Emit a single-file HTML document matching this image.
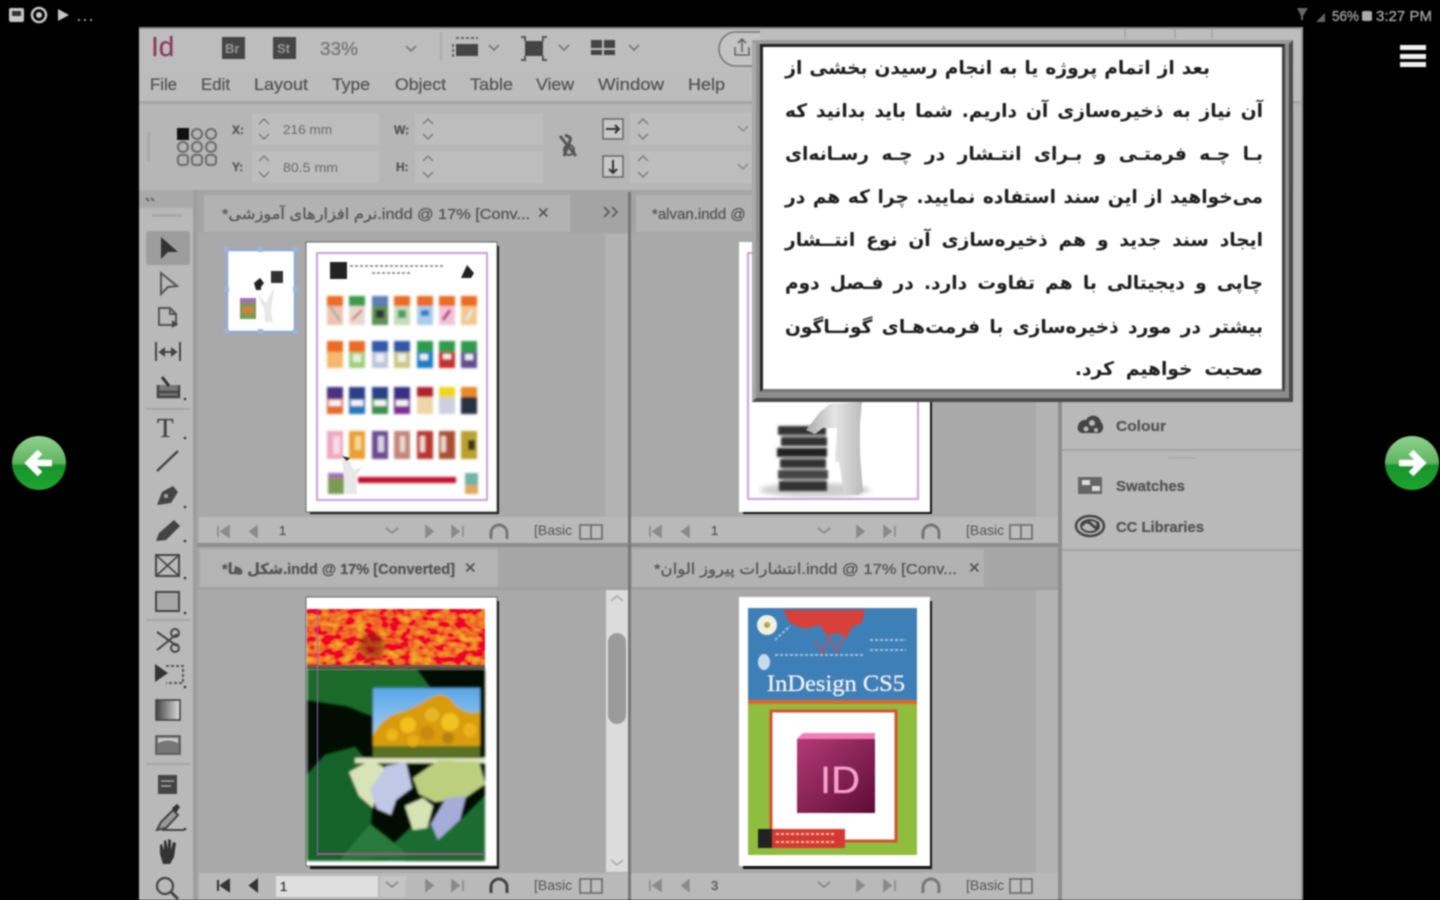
<!DOCTYPE html>
<html lang="en">
<head>
<meta charset="utf-8">
<title>InDesign lesson</title>
<style>
html,body{margin:0;padding:0;background:#000;width:1440px;height:900px;overflow:hidden}
#wrap{position:absolute;left:0;top:0;width:1440px;height:900px;filter:blur(.8px);overflow:hidden}
svg{position:absolute;left:0;top:0}
svg text{font-family:"Liberation Sans","DejaVu Sans",sans-serif;fill:#555;stroke:#555;stroke-width:.3px}
#pop{position:absolute;left:752px;top:40px;width:541px;height:362px;box-sizing:border-box;background:#8e8e8e;border-top:4px solid #9a9a9a;border-left:4px solid #a8a8a8;border-right:4px solid #4a4a4a;border-bottom:4px solid #4a4a4a}
#in{position:absolute;left:4px;top:0;width:525px;height:348px;box-sizing:border-box;background:#fff;border:3px solid #222;border-right-color:#444;border-bottom-color:#777}
.l{position:absolute;left:22px;width:478px;height:43px;line-height:43px;font-family:"DejaVu Sans",sans-serif;font-weight:bold;font-size:18.6px;color:#1c1c1c;direction:rtl;text-align:justify;text-align-last:justify;white-space:nowrap}
.s{text-align-last:right;text-align:right}
</style>
</head>
<body>
<div id="wrap">
<svg width="1440" height="900" viewBox="0 0 1440 900" xmlns="http://www.w3.org/2000/svg">
<defs>
<linearGradient id="gl" x1="0" y1="0" x2="0" y2="1"><stop offset="0" stop-color="#8fd08f"/><stop offset=".5" stop-color="#5fb55f"/><stop offset=".55" stop-color="#17932a"/><stop offset="1" stop-color="#1ea52f"/></linearGradient>
<linearGradient id="gr" x1="0" y1="0" x2="1" y2="0"><stop offset="0" stop-color="#444"/><stop offset="1" stop-color="#ddd"/></linearGradient>
<linearGradient id="idb" x1="0" y1="0" x2="1" y2="1"><stop offset="0" stop-color="#b33a77"/><stop offset="1" stop-color="#5d0c35"/></linearGradient>
<linearGradient id="sky" x1="0" y1="0" x2="0" y2="1"><stop offset="0" stop-color="#5aa6e6"/><stop offset="1" stop-color="#bfe0f4"/></linearGradient>
<linearGradient id="man" x1="0" y1="0" x2="1" y2="0"><stop offset="0" stop-color="#aaa"/><stop offset=".5" stop-color="#e4e4e4"/><stop offset="1" stop-color="#bbb"/></linearGradient>
<filter id="n1" x="0" y="0" width="100%" height="100%"><feTurbulence type="fractalNoise" baseFrequency=".09 .14" numOctaves="2" seed="4"/><feColorMatrix values="0 0 0 0 .86  0 0 0 1.1 -.42  0 0 0 0 .02  0 0 0 0 1"/></filter>
<filter id="b1"><feGaussianBlur stdDeviation="1"/></filter>
<filter id="b2"><feGaussianBlur stdDeviation="2.500"/></filter>
</defs>

<!-- status bar -->
<g fill="#c8c8c8">
<rect x="9" y="8" width="15" height="14" rx="2"/><rect x="12" y="11" width="9" height="5" fill="#333"/>
<circle cx="39" cy="15" r="7" fill="none" stroke="#c8c8c8" stroke-width="2.5"/><circle cx="39" cy="15" r="3"/>
<path d="M58 9v12l11-6z"/>
<circle cx="79" cy="20" r="1"/><circle cx="85" cy="20" r="1"/><circle cx="91" cy="20" r="1"/>
</g>
<path d="M1297 8h11l-5 8v4h-2v-4z" fill="#666"/><path d="M1316 22l9-9v9z" fill="#666"/>
<text x="1332" y="21" font-size="15" textLength="27" lengthAdjust="spacingAndGlyphs" style="fill:#a5a5a5;stroke:#a5a5a5">56%</text>
<rect x="1362" y="11" width="10" height="10" rx="2" fill="#aaa"/>
<text x="1376" y="21" font-size="15" textLength="56" lengthAdjust="spacingAndGlyphs" style="fill:#a5a5a5;stroke:#a5a5a5">3:27 PM</text>
<g fill="#f0f0f0"><rect x="1400" y="45" width="26" height="5"/><rect x="1400" y="54" width="26" height="5"/><rect x="1400" y="62" width="26" height="5"/></g>

<!-- arrows -->
<circle cx="39" cy="463" r="27" fill="url(#gl)"/>
<path d="M52 463H32M40 452l-11 11 11 11" fill="none" stroke="#fff" stroke-width="6.5"/>
<circle cx="1412" cy="463" r="27" fill="url(#gl)"/>
<path d="M1399 463h20M1411 452l11 11-11 11" fill="none" stroke="#fff" stroke-width="6.5"/>

<!-- app window -->
<rect x="139" y="27" width="1164" height="873" fill="#b7b7b7"/>
<rect x="139" y="27" width="1164" height="2" fill="#8a8a8a"/>
<rect x="139" y="29" width="1164" height="41" fill="#bdbdbd"/>
<rect x="139" y="70" width="1164" height="32" fill="#bcbcbc"/>
<rect x="139" y="101" width="1164" height="3" fill="#a5a5a5"/>
<rect x="139" y="104" width="1164" height="86" fill="#b6b6b6"/>

<text x="151" y="56" font-size="28" style="fill:#8b3d5c;stroke:#8b3d5c">Id</text>
<rect x="222" y="37" width="23" height="22" fill="#454545"/><text x="225" y="53" font-size="13" font-weight="bold" style="fill:#999;stroke:none">Br</text>
<rect x="273" y="37" width="23" height="22" fill="#454545"/><text x="277" y="53" font-size="13" font-weight="bold" style="fill:#999;stroke:none">St</text>
<text x="320" y="55" font-size="18" textLength="38" lengthAdjust="spacingAndGlyphs" style="fill:#777;stroke:#777">33%</text>
<g fill="none" stroke="#777" stroke-width="1.6"><path d="M406 46l5 5 5-5M489 45l5 5 5-5M559 45l5 5 5-5M629 45l5 5 5-5"/></g>
<rect x="440" y="32" width="2" height="28" fill="#aaa"/>
<rect x="456" y="44" width="22" height="12" fill="#444"/><path d="M456 38h22M453 44v14" stroke="#666" stroke-width="2" stroke-dasharray="3 2" fill="none"/>
<rect x="525" y="41" width="18" height="15" fill="#444"/><path d="M521 37h4v4M547 37h-4v4M521 60h4v-4M547 60h-4v-4" stroke="#555" fill="none" stroke-width="2"/>
<path d="M591 40h11v8h-11zM604 40h11v8h-11zM591 50h11v5h-11zM604 50h11v5h-11z" fill="#444"/>
<path d="M760 32h-24a17 17 0 0 0 0 34h24" fill="#c4c4c4" stroke="#777" stroke-width="1.6"/>
<path d="M735 47v8h14v-8M742 52v-12M738 43l4-4 4 4" fill="none" stroke="#666" stroke-width="1.6"/>

<g>
<text x="150" y="90" font-size="17" textLength="27" lengthAdjust="spacingAndGlyphs">File</text><text x="201" y="90" font-size="17" textLength="29" lengthAdjust="spacingAndGlyphs">Edit</text><text x="254" y="90" font-size="17" textLength="54" lengthAdjust="spacingAndGlyphs">Layout</text><text x="332" y="90" font-size="17" textLength="38" lengthAdjust="spacingAndGlyphs">Type</text><text x="395" y="90" font-size="17" textLength="51" lengthAdjust="spacingAndGlyphs">Object</text><text x="470" y="90" font-size="17" textLength="43" lengthAdjust="spacingAndGlyphs">Table</text><text x="536" y="90" font-size="17" textLength="38" lengthAdjust="spacingAndGlyphs">View</text><text x="598" y="90" font-size="17" textLength="66" lengthAdjust="spacingAndGlyphs">Window</text><text x="688" y="90" font-size="17" textLength="37" lengthAdjust="spacingAndGlyphs">Help</text>
</g>

<!-- control panel -->
<rect x="147" y="132" width="3" height="30" fill="#a8a8a8"/>
<rect x="177" y="128" width="12" height="12" fill="#111"/>
<g fill="none" stroke="#6a6a6a" stroke-width="2">
<circle cx="197" cy="134" r="5"/><circle cx="211" cy="134" r="5"/>
<circle cx="183" cy="147" r="5"/><circle cx="197" cy="147" r="5"/><circle cx="211" cy="147" r="5"/>
<rect x="178" y="155" width="10" height="10" rx="3"/><rect x="192" y="155" width="10" height="10" rx="3"/><rect x="206" y="155" width="10" height="10" rx="3"/>
</g>
<g fill="#bdbdbd"><rect x="252" y="113" width="127" height="32"/><rect x="252" y="151" width="127" height="32"/><rect x="415" y="114" width="128" height="31"/><rect x="415" y="151" width="128" height="32"/><rect x="630" y="113" width="125" height="32"/><rect x="630" y="151" width="125" height="32"/></g>
<text x="232" y="134" font-size="12" font-weight="bold">X:</text><text x="232" y="171" font-size="12" font-weight="bold">Y:</text>
<text x="283" y="134" font-size="13" textLength="49" lengthAdjust="spacingAndGlyphs" style="fill:#6a6a6a;stroke:none">216 mm</text><text x="283" y="172" font-size="13" textLength="55" lengthAdjust="spacingAndGlyphs" style="fill:#6a6a6a;stroke:none">80.5 mm</text>
<text x="394" y="134" font-size="12" font-weight="bold">W:</text><text x="396" y="171" font-size="12" font-weight="bold">H:</text>
<g fill="none" stroke="#7c7c7c" stroke-width="1.5"><path d="M259 124l5-5 5 5M259 134l5 5 5-5M259 161l5-5 5 5M259 172l5 5 5-5M423 124l5-5 5 5M423 134l5 5 5-5M423 161l5-5 5 5M423 172l5 5 5-5M638 124l5-5 5 5M638 134l5 5 5-5M638 161l5-5 5 5M638 172l5 5 5-5"/></g>
<path d="M560 136l16 20M565 135l6 3M571 138l-7 18" stroke="#555" stroke-width="3" fill="none"/><circle cx="569" cy="150" r="5" fill="none" stroke="#555" stroke-width="2"/>
<rect x="603" y="119" width="20" height="20" fill="#c8c8c8" stroke="#666" stroke-width="1.5"/><path d="M606 129h13M615 125l4 4-4 4" fill="none" stroke="#333" stroke-width="2"/>
<rect x="603" y="156" width="20" height="21" fill="#c8c8c8" stroke="#666" stroke-width="1.5"/><path d="M613 160v13M609 169l4 4 4-4" fill="none" stroke="#333" stroke-width="2"/>
<path d="M738 126l5 5 5-5M738 164l5 5 5-5" fill="none" stroke="#8a8a8a" stroke-width="1.5"/>

<!-- document area -->
<rect x="195" y="190" width="867" height="710" fill="#a9a9a9"/>
<rect x="195" y="190" width="867" height="43" fill="#a4a4a4"/>
<rect x="195" y="545" width="867" height="43" fill="#a6a6a6"/>
<rect x="204" y="195" width="366" height="37" fill="#b2b2b2"/>
<rect x="636" y="195" width="124" height="37" fill="#b2b2b2"/>
<rect x="200" y="549" width="298" height="38" fill="#b4b4b4"/>
<rect x="632" y="549" width="352" height="38" fill="#b2b2b2"/>
<rect x="195" y="587" width="867" height="3" fill="#a0a0a0"/>

<text x="222" y="219" font-size="15" textLength="308" lengthAdjust="spacingAndGlyphs">*نرم افزارهای آموزشی.indd @ 17% [Conv...</text>
<text x="537" y="218" font-size="15" font-weight="bold">✕</text>
<path d="M604 207l5 5-5 5M612 207l5 5-5 5" fill="none" stroke="#5a5a5a" stroke-width="1.8"/>
<text x="652" y="219" font-size="15">*alvan.indd @</text>
<text x="222" y="574" font-size="15" font-weight="bold" textLength="233" lengthAdjust="spacingAndGlyphs">*شکل ها.indd @ 17% [Converted]</text>
<text x="464" y="573" font-size="15" font-weight="bold">✕</text>
<text x="654" y="574" font-size="15" textLength="303" lengthAdjust="spacingAndGlyphs">*انتشارات پیروز الوان.indd @ 17% [Conv...</text>
<text x="968" y="573" font-size="15" font-weight="bold">✕</text>

<!-- scrollbars -->
<rect x="605" y="234" width="23" height="283" fill="#b3b3b3"/>
<rect x="1036" y="234" width="22" height="283" fill="#b3b3b3"/>
<rect x="606" y="590" width="22" height="282" fill="#dcdcdc"/>
<rect x="608" y="633" width="18" height="91" rx="9" fill="#9b9b9b"/>
<path d="M611 601l6-5 6 5M611 860l6 5 6-5" fill="none" stroke="#aaa" stroke-width="1.6"/>
<rect x="1036" y="590" width="22" height="283" fill="#b3b3b3"/>

<!-- status strips -->
<rect x="199" y="517" width="430" height="26" fill="#b9b9b9"/>
<rect x="631" y="517" width="427" height="26" fill="#b9b9b9"/>
<rect x="199" y="873" width="430" height="27" fill="#b9b9b9"/>
<rect x="631" y="873" width="427" height="27" fill="#b9b9b9"/>
<rect x="195" y="543" width="867" height="4" fill="#8d8d8d"/>
<rect x="628" y="192" width="3" height="708" fill="#767676"/>
<rect x="1058" y="190" width="4" height="710" fill="#8d8d8d"/>
<rect x="276" y="876" width="102" height="21" fill="#dedede"/>
<rect x="380" y="876" width="26" height="21" fill="#c4c4c4"/>

<g fill="#8a8a8a" stroke="#8a8a8a">
<path d="M218 526v11M229 526l-8 5.500 8 5.500zM257 526l-7 5.500 7 5.500zM426 526l7 5.500-7 5.500zM452 526l7 5.500-7 5.500zM463 526v11" stroke-width="1.6"/>
<path d="M650 526v11M661 526l-8 5.500 8 5.500zM689 526l-7 5.500 7 5.500zM857 526l7 5.500-7 5.500zM884 526l7 5.500-7 5.500zM895 526v11" stroke-width="1.6"/>
<path d="M650 880v11M661 880l-8 5.500 8 5.500zM689 880l-7 5.500 7 5.500zM857 880l7 5.500-7 5.500zM884 880l7 5.500-7 5.500zM895 880v11" stroke-width="1.6"/>
<path d="M426 880l7 5.500-7 5.500zM452 880l7 5.500-7 5.500zM463 880v11" stroke-width="1.6"/>
</g>
<path d="M218 880v11M229 880l-8 5.500 8 5.500zM257 880l-7 5.500 7 5.500z" fill="#333" stroke="#333" stroke-width="2"/>
<g fill="none" stroke="#8a8a8a" stroke-width="1.8"><path d="M386 528l6 5 6-5M818 528l6 5 6-5M386 882l6 5 6-5M818 882l6 5 6-5"/></g>
<text x="279" y="535" font-size="13">1</text><text x="711" y="535" font-size="13">1</text><text x="280" y="891" font-size="13" style="fill:#333;stroke:#333">1</text><text x="711" y="890" font-size="13">3</text>
<g fill="none" stroke="#777" stroke-width="3"><path d="M491 539v-6a8 8 0 0 1 16 0v6M923 539v-6a8 8 0 0 1 16 0v6M923 893v-6a8 8 0 0 1 16 0v6"/></g>
<path d="M491 893v-6a8 8 0 0 1 16 0v6" fill="none" stroke="#444" stroke-width="3"/>
<g><text x="534" y="535" font-size="14" style="stroke:none">[Basic</text><text x="966" y="535" font-size="14" style="stroke:none">[Basic</text><text x="534" y="890" font-size="14" style="stroke:none">[Basic</text><text x="966" y="890" font-size="14" style="stroke:none">[Basic</text></g>
<g fill="#bdbdbd" stroke="#666" stroke-width="1.6"><path d="M580 525h22v14h-22zM591 525v14M1010 525h22v14h-22zM1021 525v14M580 879h22v14h-22zM591 879v14M1010 879h22v14h-22zM1021 879v14"/></g>

<!-- toolbar -->
<rect x="139" y="190" width="56" height="710" fill="#b9b9b9"/>
<rect x="139" y="190" width="56" height="18" fill="#a9a9a9"/>
<rect x="193" y="190" width="4" height="710" fill="#9e9e9e"/>
<path d="M146 198l3 3M151 198l3 3" stroke="#666" stroke-width="2"/>
<rect x="152" y="214" width="30" height="3" fill="#a8a8a8"/>
<rect x="146" y="231" width="44" height="34" rx="3" fill="#9d9d9d"/>
<rect x="146" y="408" width="44" height="2" fill="#a5a5a5"/>
<rect x="146" y="619" width="44" height="2" fill="#a5a5a5"/>
<rect x="146" y="763" width="44" height="2" fill="#a5a5a5"/>
<path d="M161 237l17 15-10 0-7 7z" fill="#333"/>
<path d="M161 273l16 13-9 1-7 7z" fill="none" stroke="#555" stroke-width="2"/>
<path d="M159 308h11l6 6v11h-17zM170 308v6h6" fill="none" stroke="#555" stroke-width="2"/><path d="M172 320l6 4-6 4z" fill="#444"/>
<path d="M156 342v19M180 342v19M160 352h16M160 352l4-3v6zM176 352l-4-3v6z" fill="none" stroke="#444" stroke-width="2"/>
<path d="M158 385v12h21v-12M158 392h21" fill="#777" stroke="#444" stroke-width="2.5"/><path d="M162 377l7 9" stroke="#333" stroke-width="3"/>
<text x="157" y="437" font-size="27" style="font-family:'Liberation Serif',serif;fill:#444;stroke:#444">T</text>
<path d="M157 471l21-20" stroke="#444" stroke-width="2.4"/>
<path d="M157 505l5-13 11-6 5 6-7 11z" fill="#444"/><circle cx="166" cy="496" r="2" fill="#aaa"/>
<path d="M156 541l3-8 15-13 6 6-14 14z" fill="#444"/>
<rect x="156" y="555" width="23" height="21" fill="none" stroke="#444" stroke-width="2"/><path d="M156 555l23 21M179 555l-23 21" stroke="#444" stroke-width="1.6"/>
<rect x="156" y="592" width="23" height="19" fill="#a8a8a8" stroke="#444" stroke-width="2"/>
<path d="M157 632l20 14M157 650l20-16" stroke="#444" stroke-width="2"/><circle cx="175" cy="633" r="4" fill="none" stroke="#444" stroke-width="2"/><circle cx="175" cy="648" r="4" fill="none" stroke="#444" stroke-width="2"/>
<path d="M155 664l13 9-13 9z" fill="#333"/><path d="M166 666h17v17h-17" fill="none" stroke="#555" stroke-width="2" stroke-dasharray="3 2"/>
<rect x="156" y="700" width="24" height="20" fill="url(#gr)" stroke="#444" stroke-width="1.6"/>
<rect x="156" y="736" width="24" height="18" fill="#777" stroke="#555" stroke-width="1.6"/><path d="M158 743q10-5 20 0v-5h-20z" fill="#ccc"/>
<rect x="158" y="775" width="19" height="19" fill="#444"/><path d="M161 781h13M161 786h10" stroke="#aaa" stroke-width="1.5"/>
<path d="M157 830l4-8 12-12 5 5-12 13z" fill="#999" stroke="#444" stroke-width="2"/><path d="M172 808l5-4 3 3-4 6z" fill="#333"/><path d="M162 830h22" stroke="#444" stroke-width="2"/>
<path d="M160 854v-9l2-1 2 6v-9l2-1 2 9v-10l3 1v10l2-8 3 1-2 14-4 7h-7z" fill="#333"/>
<circle cx="165" cy="886" r="8" fill="none" stroke="#444" stroke-width="2.2"/><path d="M171 892l7 7" stroke="#444" stroke-width="3"/>
<g fill="#333"><circle cx="185" cy="399" r="1.300"/><circle cx="185" cy="438" r="1.300"/><circle cx="185" cy="507" r="1.300"/><circle cx="185" cy="541" r="1.300"/><circle cx="185" cy="578" r="1.300"/><circle cx="185" cy="613" r="1.300"/><circle cx="185" cy="687" r="1.300"/><circle cx="185" cy="829" r="1.300"/></g>

<!-- right panel -->
<rect x="1062" y="190" width="240" height="710" fill="#b7b7b7"/>
<rect x="1062" y="404" width="240" height="45" fill="#b9b9b9"/>
<rect x="1062" y="449" width="240" height="2" fill="#a3a3a3"/>
<rect x="1062" y="451" width="240" height="98" fill="#b9b9b9"/>
<rect x="1062" y="549" width="240" height="2" fill="#a3a3a3"/>
<rect x="1168" y="457" width="28" height="2" fill="#a9a9a9"/>
<rect x="1301" y="27" width="2" height="873" fill="#9a9a9a"/>
<path d="M1078 426a7 7 0 0 1 8-6a8 8 0 0 1 15 2a7 7 0 0 1-1 11h-17a5 5 0 0 1-5-7z" fill="#444"/><circle cx="1092" cy="423" r="3" fill="#b9b9b9"/><circle cx="1086" cy="429" r="2.500" fill="#b9b9b9"/><circle cx="1096" cy="430" r="2" fill="#b9b9b9"/>
<text x="1116" y="431" font-size="15" font-weight="bold" textLength="50" lengthAdjust="spacingAndGlyphs">Colour</text>
<rect x="1078" y="477" width="24" height="17" fill="#666"/><rect x="1082" y="480" width="8" height="5" fill="#ddd"/><rect x="1092" y="486" width="8" height="5" fill="#ddd"/>
<text x="1116" y="491" font-size="15" font-weight="bold" textLength="69" lengthAdjust="spacingAndGlyphs">Swatches</text>
<ellipse cx="1090" cy="526" rx="14" ry="10" fill="none" stroke="#444" stroke-width="2.500"/><ellipse cx="1090" cy="526" rx="9" ry="6" fill="none" stroke="#444" stroke-width="2"/><path d="M1082 526a5 5 0 0 1 9-2l5 4a4 4 0 0 0 1-6" fill="none" stroke="#444" stroke-width="3"/>
<text x="1116" y="532" font-size="15" font-weight="bold" textLength="88" lengthAdjust="spacingAndGlyphs">CC Libraries</text>

<!-- small pasteboard item -->
<rect x="227" y="250" width="68" height="82" fill="#fff" stroke="#8faad8" stroke-width="2.500"/>
<g fill="#9db4de"><rect x="224" y="247" width="5" height="5"/><rect x="258" y="247" width="5" height="5"/><rect x="293" y="247" width="5" height="5"/><rect x="224" y="287" width="5" height="5"/><rect x="293" y="287" width="5" height="5"/><rect x="224" y="329" width="5" height="5"/><rect x="258" y="329" width="5" height="5"/><rect x="293" y="329" width="5" height="5"/></g>
<rect x="271" y="271" width="12" height="12" fill="#333"/><path d="M254 283l6-5 4 5-3 4v3h-5z" fill="#222"/>
<rect x="240" y="298" width="16" height="21" fill="#7b9b55"/><rect x="240" y="298" width="16" height="5" fill="#a56fb3"/><rect x="243" y="307" width="10" height="6" fill="#e07b3a"/>
<path d="M258 295l8 8 8-16-3 25 2 10h-8l-1-12z" fill="#e8e8e8"/>

<!-- page 1 -->
<rect x="310" y="246" width="189" height="268" fill="#111"/>
<rect x="306" y="242" width="191" height="270" fill="#fff" stroke="#666" stroke-width="1"/>
<rect x="317" y="253" width="170" height="247" fill="none" stroke="#c9a0e4" stroke-width="2"/>
<rect x="330" y="262" width="17" height="17" fill="#222"/>
<path d="M350 266h95M372 273h40" stroke="#999" stroke-width="2" stroke-dasharray="3 2"/>
<path d="M461 278l6-13 7 8-3 5z" fill="#222"/>
<g filter="url(#b1)">
<rect x="327" y="296" width="16" height="29" fill="#edc3ae"/><rect x="327" y="296" width="16" height="10" fill="#ec6a22"/><path d="M330 306l10 15" stroke="#8aa" stroke-width="2"/>
<rect x="349" y="296" width="16" height="29" fill="#e7d9cf"/><rect x="349" y="296" width="16" height="10" fill="#3b9a4c"/><path d="M352 320l10-10" stroke="#c66" stroke-width="2"/>
<rect x="372" y="296" width="16" height="29" fill="#5f8f55"/><rect x="372" y="296" width="16" height="10" fill="#5c7eb4"/><rect x="376" y="310" width="8" height="8" fill="#333"/>
<rect x="394" y="296" width="16" height="29" fill="#c6dbb6"/><rect x="394" y="296" width="16" height="10" fill="#ec6a22"/><rect x="398" y="310" width="8" height="8" fill="#4a9c6a"/>
<rect x="417" y="296" width="16" height="29" fill="#a8cdeb"/><rect x="417" y="296" width="16" height="10" fill="#ec6a22"/><rect x="421" y="310" width="8" height="6" fill="#2a7ec0"/>
<rect x="439" y="296" width="16" height="29" fill="#f0c3d8"/><rect x="439" y="296" width="16" height="10" fill="#ec6a22"/><path d="M443 320l7-10" stroke="#b0246a" stroke-width="3"/>
<rect x="461" y="296" width="16" height="29" fill="#f2c88a"/><rect x="461" y="296" width="16" height="10" fill="#ec6a22"/><path d="M466 320l6-10" stroke="#e8e8e8" stroke-width="3"/>
<rect x="327" y="341" width="16" height="27" fill="#f4b96c"/><rect x="327" y="341" width="16" height="11" fill="#ec6a22"/>
<rect x="349" y="341" width="16" height="27" fill="#9fcf7c"/><rect x="349" y="341" width="16" height="11" fill="#ec6a22"/><rect x="353" y="354" width="8" height="8" fill="#e8f0e0"/>
<rect x="372" y="341" width="16" height="27" fill="#bcc6dc"/><rect x="372" y="341" width="16" height="11" fill="#3258a8"/><rect x="376" y="354" width="8" height="8" fill="#f0f0f0"/>
<rect x="394" y="341" width="16" height="27" fill="#c8c883"/><rect x="394" y="341" width="16" height="11" fill="#3258a8"/><rect x="398" y="354" width="8" height="8" fill="#f0f0f0"/>
<rect x="417" y="341" width="16" height="27" fill="#1f7ec4"/><rect x="417" y="341" width="16" height="11" fill="#2f9a4d"/><rect x="420" y="354" width="8" height="6" fill="#f0f0f0"/>
<rect x="439" y="341" width="16" height="27" fill="#c52e2e"/><rect x="439" y="341" width="16" height="11" fill="#2f9a4d"/><rect x="443" y="354" width="8" height="5" fill="#f0f0f0"/>
<rect x="461" y="341" width="16" height="27" fill="#5d4b8f"/><rect x="461" y="341" width="16" height="11" fill="#2f9a4d"/><rect x="465" y="354" width="8" height="6" fill="#f0f0f0"/>
<rect x="327" y="387" width="16" height="27" fill="#e56c2c"/><rect x="327" y="387" width="16" height="12" fill="#46337f"/><rect x="329" y="400" width="12" height="6" fill="#f4f4f4"/>
<rect x="349" y="387" width="16" height="27" fill="#2477bb"/><rect x="349" y="387" width="16" height="12" fill="#2c3f86"/><rect x="351" y="400" width="12" height="6" fill="#f4f4f4"/>
<rect x="372" y="387" width="16" height="27" fill="#3a8f4a"/><rect x="372" y="387" width="16" height="12" fill="#2c3f86"/><rect x="374" y="400" width="12" height="6" fill="#f4f4f4"/>
<rect x="394" y="387" width="16" height="27" fill="#7e2f8f"/><rect x="394" y="387" width="16" height="12" fill="#3b2f86"/><rect x="396" y="400" width="12" height="6" fill="#f4f4f4"/>
<rect x="417" y="387" width="16" height="27" fill="#eed6a8"/><rect x="417" y="387" width="16" height="10" fill="#b0242e"/>
<rect x="439" y="387" width="16" height="27" fill="#ccd0dc"/><rect x="439" y="387" width="16" height="10" fill="#f3d51e"/>
<rect x="461" y="387" width="16" height="27" fill="#25303f"/><rect x="461" y="387" width="16" height="10" fill="#e8892b"/>
<rect x="327" y="431" width="16" height="28" fill="#eda7bf"/><rect x="333" y="436" width="7" height="18" fill="#f6dbe6"/>
<rect x="349" y="431" width="16" height="28" fill="#e9a12e"/><rect x="355" y="436" width="6" height="14" fill="#f3d99a"/>
<rect x="372" y="431" width="16" height="28" fill="#6c4b8e"/><rect x="378" y="436" width="6" height="16" fill="#dcd4e8"/>
<rect x="394" y="431" width="16" height="28" fill="#c48678"/><rect x="400" y="436" width="5" height="16" fill="#eadad4"/>
<rect x="417" y="431" width="16" height="28" fill="#b8372e"/><rect x="420" y="436" width="5" height="16" fill="#f0d8d0"/>
<rect x="439" y="431" width="16" height="28" fill="#a84f32"/><rect x="441" y="436" width="5" height="16" fill="#ecd8c8"/>
<rect x="461" y="431" width="16" height="28" fill="#b9a12f"/><rect x="468" y="440" width="7" height="10" fill="#3a3020"/>
<rect x="328" y="473" width="16" height="21" fill="#7b9b55"/><rect x="328" y="473" width="16" height="5" fill="#a56fb3"/>
<rect x="465" y="473" width="13" height="21" fill="#6fb3a8"/><rect x="465" y="485" width="13" height="9" fill="#e0a860"/>
<rect x="358" y="477" width="98" height="6" fill="#c4102a"/>
</g>
<path d="M342 458l8 4 4 8 8-3-6 10 1 17h-11l-2-18z" fill="#e8e8e8"/>
<path d="M342 456l8 2-3 3z" fill="#222"/>

<!-- page 2 -->
<rect x="743" y="246" width="189" height="268" fill="#111"/>
<rect x="739" y="242" width="191" height="270" fill="#fff"/>
<rect x="748" y="253" width="170" height="246" fill="none" stroke="#c9a0e4" stroke-width="2"/>
<ellipse cx="815" cy="490" rx="55" ry="7" fill="#ccc" filter="url(#b2)"/>
<g fill="#333" filter="url(#b1)"><rect x="778" y="426" width="48" height="9"/><rect x="781" y="437" width="46" height="9"/><rect x="777" y="448" width="50" height="9" fill="#222"/><rect x="780" y="459" width="46" height="9"/><rect x="778" y="470" width="50" height="9" fill="#444"/><rect x="779" y="481" width="48" height="10"/>
<rect x="782" y="435" width="44" height="2" fill="#aaa"/><rect x="782" y="457" width="44" height="2" fill="#aaa"/><rect x="782" y="468" width="44" height="2" fill="#aaa"/><rect x="782" y="479" width="44" height="2" fill="#aaa"/></g>
<path d="M806 430l14-18 10-8 32-2-2 22 0 30 3 38-5 3-14-1-5-32-4 0 2-34-14 0-8 6z" fill="url(#man)"/>

<!-- page 3 flowers -->
<rect x="310" y="601" width="189" height="268" fill="#111"/>
<rect x="306" y="597" width="191" height="269" fill="#fff" stroke="#666"/>
<rect x="307" y="609" width="178" height="56" filter="url(#n1)"/>
<circle cx="372" cy="646" r="13" fill="#8a1a08" opacity=".6" filter="url(#b2)"/>
<rect x="307" y="665" width="178" height="4" fill="#6e5a4a"/>
<g filter="url(#b1)">
<rect x="307" y="669" width="178" height="192" fill="#020c03"/>
<path d="M307 670h110l15 20-18 22-37 6-30-12-40-6z" fill="#1c6a2c"/>
<path d="M307 775l18-20 30-8 20 24-5 62 35 28H307z" fill="#17632a"/>
<path d="M385 852l32-30 38 4 30-30v64H390z" fill="#1c6c31"/>
<path d="M340 860l30-36 40 32z" fill="#2a7a3a"/>
<rect x="373" y="688" width="107" height="69" fill="url(#sky)"/>
<path d="M373 757v-22q10-18 25-22t30-14 25 3 27 10v45z" fill="#d89c10"/>
<rect x="373" y="746" width="107" height="11" fill="#5a6f20"/>
<circle cx="432" cy="715" r="7" fill="#e5b525"/><circle cx="408" cy="725" r="8" fill="#f2bf1f"/><circle cx="450" cy="722" r="9" fill="#f2c224"/><circle cx="427" cy="733" r="7" fill="#c78a0c"/><circle cx="470" cy="730" r="7" fill="#eab21a"/><circle cx="392" cy="735" r="6" fill="#eeb51d"/><circle cx="448" cy="738" r="6" fill="#b9800c"/><circle cx="413" cy="741" r="6" fill="#e4ac15"/>
<rect x="355" y="758" width="130" height="5" fill="#dfe6c0"/>
<path d="M349 772l22-12 14 8-6 18-6 22-14-12z" fill="#d9e3b8"/>
<path d="M370 790l16-24 20-4 6 26-16 12-5 15-14-6z" fill="#c0c8e6"/>
<path d="M413 778l26-18 40 2 6 22-20 14-30 4-16-8z" fill="#bccf7f"/>
<path d="M405 806l18-8 10 8-6 22-14 2z" fill="#d6e3b5"/>
<path d="M431 824l15-26 20-2-6 24-22 20z" fill="#a5acd8"/>
</g>
<rect x="317" y="610" width="1" height="246" fill="#a060d0"/>
<rect x="317" y="853" width="168" height="2" fill="#9a5a90"/>

<!-- page 4 InDesign cover -->
<rect x="743" y="601" width="189" height="268" fill="#111"/>
<rect x="739" y="597" width="191" height="269" fill="#fff"/>
<rect x="748" y="608" width="169" height="92" fill="#3f7fb8"/>
<path d="M783 610h82l-3 13-10 4-6 12-7-6-12 2-8-10-14 4-15-6z" fill="#d8403a"/>
<path d="M815 640l8 14 6-18 8 16 8-20" fill="none" stroke="#c24f5a" stroke-width="1.500"/>
<circle cx="767" cy="625" r="10" fill="#f0efe0"/><circle cx="767" cy="625" r="3" fill="#b7a24a"/>
<ellipse cx="764" cy="662" rx="6" ry="8" fill="#c7dceb"/>
<path d="M775 640l15-14M870 640h36M870 650h36M775 655h90" stroke="#9cc4e0" stroke-width="2" stroke-dasharray="3 2"/>
<text x="767" y="691" font-size="23" textLength="138" lengthAdjust="spacingAndGlyphs" style="font-family:'Liberation Serif',serif;fill:#f2f2f2;stroke:#f2f2f2">InDesign CS5</text>
<rect x="748" y="700" width="169" height="4" fill="#e0682a"/>
<rect x="748" y="704" width="169" height="151" fill="#8fbd3e"/>
<rect x="771" y="711" width="125" height="130" fill="#fff" stroke="#d8502e" stroke-width="3"/>
<path d="M797 739l6-6h72v6z" fill="#ef7fb4"/>
<rect x="797" y="739" width="78" height="74" fill="url(#idb)"/>
<text x="820" y="793" font-size="38" textLength="40" lengthAdjust="spacingAndGlyphs" style="fill:#f5a0cc;stroke:#f5a0cc">ID</text>
<rect x="758" y="829" width="87" height="19" fill="#d43a32"/><rect x="758" y="829" width="14" height="19" fill="#222"/>
<path d="M776 834h60M776 842h60" stroke="#f0c0b0" stroke-width="2" stroke-dasharray="3 2"/>

<!-- bits behind popup top -->
<path d="M1125 29v10M1175 29v10M1212 29v10" stroke="#999"/>
</svg>

<div id="pop"><div id="in">
<div class="l s" style="top:0px;padding-right:53px;width:425px;word-spacing:.55px">بعد از اتمام پروژه یا به انجام رسیدن بخشی از</div>
<div class="l" style="top:43px">آن نیاز به ذخیره‌سازی آن داریم. شما باید بدانید که</div>
<div class="l" style="top:86px">بـا چـه فرمتـی و بـرای انتـشار در چـه رسـانه‌ای</div>
<div class="l" style="top:129px">می‌خواهید از این سند استفاده نمایید. چرا که هم در</div>
<div class="l" style="top:172px">ایجاد سند جدید و هم ذخیره‌سازی آن نوع انتــشار</div>
<div class="l" style="top:215px">چاپی و دیجیتالی با هم تفاوت دارد. در فـصل دوم</div>
<div class="l" style="top:259px">بیشتر در مورد ذخیره‌سازی با فرمت‌هـای گونــاگون</div>
<div class="l s" style="top:301px;word-spacing:5.5px">صحبت خواهیم کرد.</div>
</div></div>
</div>
</body>
</html>
